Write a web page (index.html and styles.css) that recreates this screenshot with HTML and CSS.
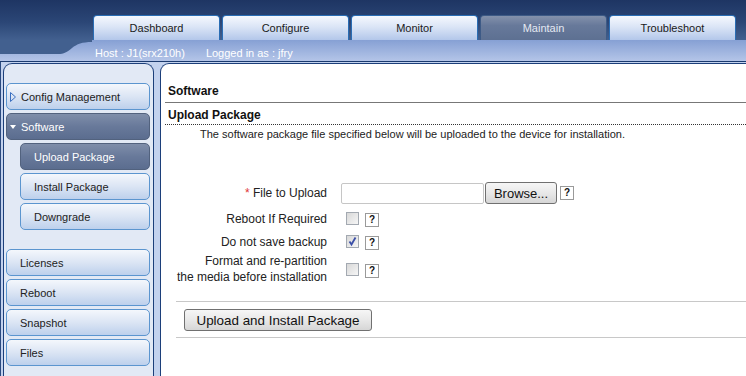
FILE: index.html
```html
<!DOCTYPE html>
<html lang="en">
<head>
    <meta charset="UTF-8">
    <title>Software - Upload Package</title>
    <link rel="stylesheet" href="styles.css">
</head>
<body>
    <div class="top">
        <nav class="tabs">
            <a class="tab">Dashboard</a>
            <a class="tab">Configure</a>
            <a class="tab">Monitor</a>
            <a class="tab active">Maintain</a>
            <a class="tab">Troubleshoot</a>
        </nav>
    </div>
    <div class="info">
        <svg class="notch" width="92" height="21" viewBox="0 0 92 21">
            <path d="M0 0 H92 V2 C82 2 77 4 72 8 C67 12 64 14 58 14 H0 Z" fill="#42608f"/>
        </svg>
        <span class="host">Host : J1(srx210h)</span>
        <span>Logged in as : jfry</span>
    </div>
    <div class="main">
        <aside class="side">
            <div class="item">
                <svg class="arrow" width="6" height="10" viewBox="0 0 6 10"><path d="M0.5 0.5 L5.5 5 L0.5 9.5 Z" fill="none" stroke="#3a6fc0" stroke-width="1"/></svg>
                Config Management
            </div>
            <div class="item selected">
                <svg class="arrow" width="6" height="10" viewBox="0 0 6 10"><path d="M0 3 H6 L3 7 Z" fill="#fff"/></svg>
                Software
            </div>
            <div class="item sub selected">Upload Package</div>
            <div class="item sub">Install Package</div>
            <div class="item sub">Downgrade</div>
            <div class="item plain group">Licenses</div>
            <div class="item plain">Reboot</div>
            <div class="item plain">Snapshot</div>
            <div class="item plain">Files</div>
        </aside>
        <section class="content">
            <h1 class="title">Software</h1>
            <h2 class="subtitle">Upload Package</h2>
            <p class="desc">The software package file specified below will be uploaded to the device for installation.</p>

            <div class="form">
                <div class="row r1">
                    <label class="label"><span class="req">*</span> File to Upload</label>
                    <div class="ctrl">
                        <span class="file"></span><button class="btn browse">Browse...</button><span class="help">?</span>
                    </div>
                </div>
                <div class="row r2">
                    <label class="label">Reboot If Required</label>
                    <div class="ctrl"><span class="check"></span><span class="help">?</span></div>
                </div>
                <div class="row r3">
                    <label class="label">Do not save backup</label>
                    <div class="ctrl">
                        <span class="check">
                            <svg width="11" height="11" viewBox="0 0 11 11"><path d="M2.5 5.5 L4.5 8.5 L8.5 1.5" fill="none" stroke="#3b4fa8" stroke-width="1.8"/></svg>
                        </span><span class="help">?</span>
                    </div>
                </div>
                <div class="row r4">
                    <label class="label">Format and re-partition<br>the media before installation</label>
                    <div class="ctrl"><span class="check"></span><span class="help">?</span></div>
                </div>
            </div>

            <div class="actions">
                <button class="btn submit">Upload and Install Package</button>
            </div>
        </section>
    </div>
</body>
</html>
```

FILE: styles.css
```css
body {
    margin: 0;
    font-family: "Liberation Sans", Arial, sans-serif;
    font-size: 11px;
    color: #222;
    background-color: #c3d2ee;
    height: 376px;
    overflow: hidden;
}

.top {
    height: 40px;
    background: linear-gradient(#1e3563, #2b4676 55%, #42608f);
}

.tabs {
    display: flex;
    align-items: flex-end;
    gap: 2px;
    height: 40px;
    padding-left: 93px;
}

.tab {
    width: 127px;
    height: 25px;
    box-sizing: border-box;
    line-height: 25px;
    text-align: center;
    color: #1a1a1a;
    background: linear-gradient(#f5f8fe, #dbe5f6 45%, #b3c7ea);
    border: 1px solid #2a6db4;
    border-bottom: none;
    border-radius: 4px 4px 0 0;
}

.tab.active {
    color: #e4e9f2;
    background: linear-gradient(#8391ab, #67799a 40%, #5d7092);
    border-color: #3d5a86;
}

.info {
    display: flex;
    height: 21px;
    background: linear-gradient(#86a0d4, #b4c5e8);
    border-bottom: 1px solid #1b3a6e;
    color: #fff;
}

.notch {
    display: block;
    margin-right: 3px;
}

.info span {
    padding-top: 7px;
}

.host {
    margin-right: 21px;
}

.main {
    display: flex;
    height: 314px;
    padding-top: 1px;
    border-left: 1px solid #2a4a80;
}

.side {
    width: 151px;
    box-sizing: border-box;
    margin-left: 2px;
    padding: 19px 3px 0 2px;
    background-color: #e2e9f5;
    border: 1px solid #1c3f7a;
    border-bottom: none;
    border-radius: 9px 9px 0 0;
}

.item {
    display: flex;
    align-items: center;
    height: 27px;
    box-sizing: border-box;
    margin-bottom: 3px;
    padding-left: 3px;
    border: 1px solid #5b95cf;
    border-radius: 5px;
    background: linear-gradient(#f4f7fc, #dbe5f4 50%, #bdd0ec);
    color: #222;
}

.item .arrow {
    margin-right: 5px;
}

.item.selected {
    color: #fff;
    border-color: #52627e;
    background: linear-gradient(#7f8eaa, #68799a 50%, #5b6d8f);
}

.item.sub {
    margin-left: 14px;
    padding-left: 13px;
}

.item.plain {
    padding-left: 13px;
}

.item.group {
    margin-top: 19px;
}

.content {
    flex: 1;
    margin-left: 6px;
    padding-left: 4px;
    background-color: #fff;
    border-left: 1px solid #1c3f7a;
    border-top: 1px solid #1c3f7a;
    border-radius: 9px 0 0 0;
}

.title {
    margin: 20px 0 0;
    padding: 0 0 3px 3px;
    font-size: 12px;
    line-height: 15px;
    border-bottom: 1px solid #777;
    color: #111;
}

.subtitle {
    margin: 5px 0 0;
    padding: 0 0 1px 3px;
    font-size: 12px;
    line-height: 15px;
    border-bottom: 1px dotted #333;
    color: #111;
}

.desc {
    margin: 3px 0 0;
    padding-left: 35px;
    line-height: 13px;
}

.form {
    margin-top: 40px;
}

.row {
    display: grid;
    grid-template-columns: 162px auto;
    column-gap: 14px;
    align-items: center;
    font-size: 12px;
}

.r1 { height: 24px; margin-bottom: 1px; }
.r2 { height: 25px; }
.r3 { height: 21px; }
.r4 { height: 34px; }

.label {
    text-align: right;
    line-height: 16px;
    color: #222;
}

.req {
    color: #e03535;
}

.ctrl {
    display: flex;
    align-items: center;
}

.file {
    width: 143px;
    height: 21px;
    box-sizing: border-box;
    border: 1px solid #c6c6c6;
    border-radius: 2px;
}

.btn {
    font-family: "Liberation Sans", Arial, sans-serif;
    font-size: 13px;
    color: #111;
    border: 1px solid #707070;
    border-radius: 3px;
    background: linear-gradient(#f6f6f6, #e8e8e8 50%, #d6d6d6);
    padding: 0;
}

.browse {
    width: 72px;
    height: 22px;
    margin-left: 1px;
}

.help {
    width: 14px;
    height: 14px;
    box-sizing: border-box;
    border: 1px solid #9a9a9a;
    background-color: #fff;
    font-size: 10px;
    font-weight: bold;
    line-height: 12px;
    text-align: center;
    color: #111;
    margin-top: 3px;
}

.r1 .help {
    margin-left: 3px;
    margin-top: 0;
}

.check {
    width: 13px;
    height: 13px;
    box-sizing: border-box;
    margin-left: 5px;
    margin-right: 6px;
    border: 1px solid #a3a9b1;
    background: linear-gradient(135deg, #d8d8d8, #f6f6f6);
    display: flex;
    align-items: center;
    justify-content: center;
}

.actions {
    margin: 15px 0 0 11px;
    padding: 7px 0 6px 8px;
    border-top: 1px solid #c8c8c8;
    border-bottom: 1px solid #c8c8c8;
}

.submit {
    width: 188px;
    height: 22px;
    display: block;
    font-size: 13.4px;
}
```
